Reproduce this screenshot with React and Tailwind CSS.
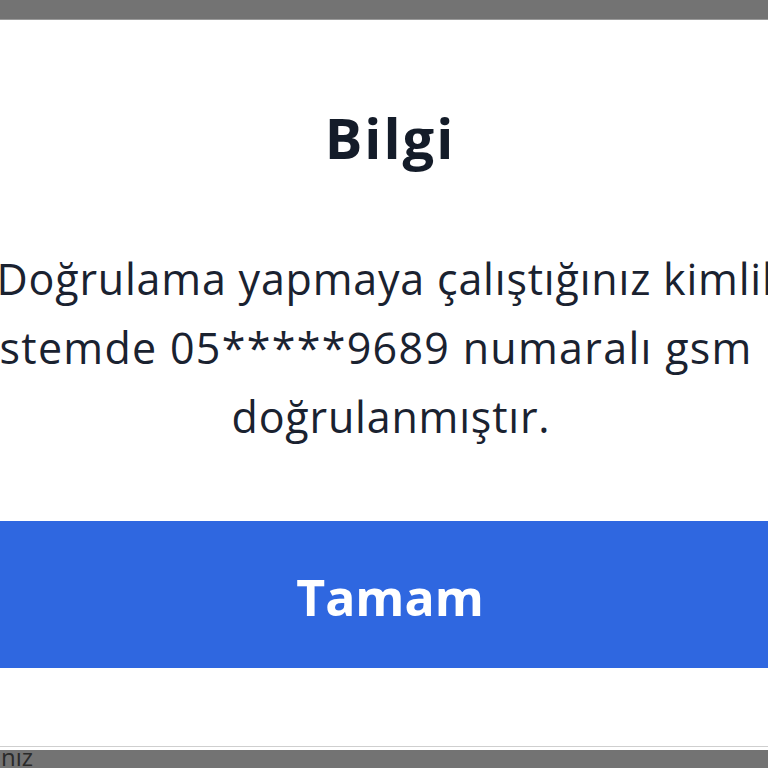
export default function App() {
  return (
    <div className="w-[768px] h-[768px] overflow-hidden bg-[#737373] flex flex-col font-['Open_Sans',sans-serif]">
      {/* dimmed page above the sheet */}
      <div className="h-[20px] shrink-0 border-b border-[#9a9a9a]" />

      {/* dialog sheet */}
      <div className="h-[730px] shrink-0 bg-white flex flex-col overflow-hidden">
        <h2 className="mt-[82px] pl-[12px] text-center text-[56px] leading-[70px] tracking-[2px] font-bold text-[#141c29]">Bilgi</h2>

        <div className="mt-[72px] pl-[14px] flex flex-col items-center text-[43px] leading-[69px] tracking-[0.8px] text-[#1a2230]">
          <p className="whitespace-nowrap">Doğrulama yapmaya çalıştığınız kimlik</p>
          <p className="whitespace-nowrap pl-[16px] tracking-[1.3px]">
            sistemde 05*****9689 numaralı gsm<span className="ml-[30px]">ile</span>
          </p>
          <p className="whitespace-nowrap">doğrulanmıştır.</p>
        </div>

        <button
          type="button"
          className="mt-[70px] h-[147px] w-full shrink-0 bg-[#2f67e0] pt-[6px] pl-[12px] text-white text-[50px] font-bold"
        >
          Tamam
        </button>
      </div>

      {/* page text peeking below */}
      <div className="border-t border-[#cfcfcf] -mt-[4px] pl-[1px] text-[24px] leading-[20px] text-[#2a2a2a]">nız</div>
    </div>
  );
}
